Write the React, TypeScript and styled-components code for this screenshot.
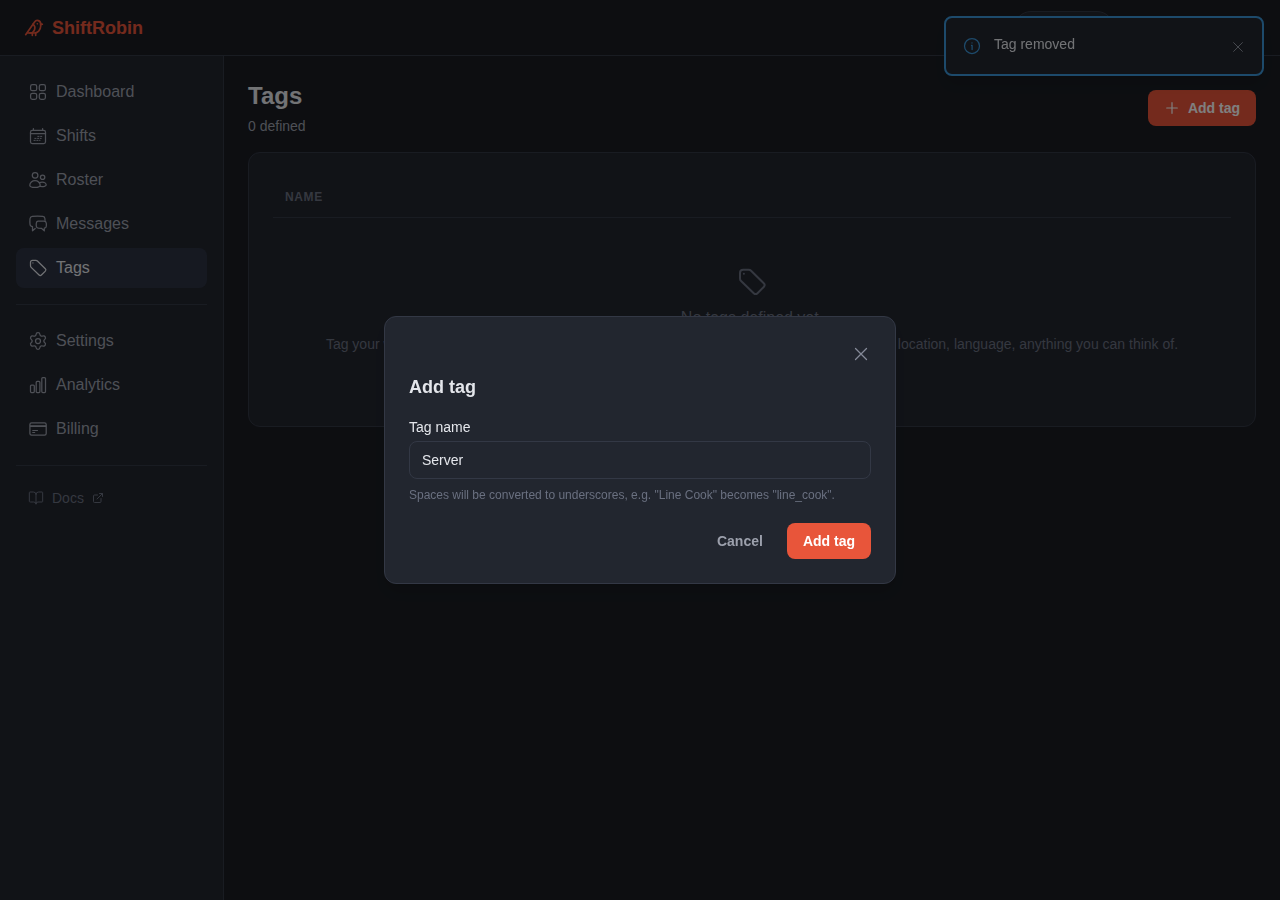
import React from "react";
import styled, { createGlobalStyle } from "styled-components";
import { Bird, BookOpen, ExternalLink, Settings } from "lucide-react";

const c = {
  bg: "#1a1d23",
  surface: "#22262f",
  border: "#333845",
  active: "#2d3343",
  text: "#e4e6eb",
  soft: "#9ca0ac",
  muted: "#858a98",
  faint: "#6a7080",
  accent: "#e8553a",
  info: "#3b95d6",
};

const GlobalStyle = createGlobalStyle`
  *, *::before, *::after { box-sizing: border-box; }
  body {
    margin: 0;
    background: ${c.bg};
    color: ${c.text};
    font-family: "Liberation Sans", Arial, sans-serif;
    font-size: 14px;
    line-height: 20px;
    overflow: hidden;
  }
  button, input { font: inherit; }
  h1, h2, h3, p { margin: 0; }
`;

const Page = styled.div`
  display: flex;
  flex-direction: column;
  height: 100vh;
`;

const Header = styled.header`
  display: flex;
  align-items: center;
  justify-content: space-between;
  height: 56px;
  padding: 0 24px;
  border-bottom: 1px solid ${c.border};
`;

const Brand = styled.div`
  display: flex;
  align-items: center;
  gap: 8px;
  color: ${c.accent};
  font-size: 18px;
  font-weight: 700;
`;

const ThemeSwitch = styled.div`
  width: 100px;
  height: 34px;
  margin-right: 142px;
  border: 1px solid ${c.border};
  border-radius: 17px;
  background: ${c.surface};
`;

const Body = styled.div`
  display: flex;
  flex: 1;
`;

const Sidebar = styled.nav`
  display: flex;
  flex-direction: column;
  gap: 4px;
  width: 224px;
  padding: 16px;
  background: ${c.surface};
  border-right: 1px solid ${c.border};
`;

const NavItem = styled.a<{ $active?: boolean }>`
  display: flex;
  align-items: center;
  gap: 8px;
  height: 40px;
  padding: 0 12px;
  border-radius: 8px;
  font-size: 16px;
  line-height: 24px;
  color: ${(p) => (p.$active ? c.text : c.soft)};
  background: ${(p) => (p.$active ? c.active : "transparent")};
`;

const Divider = styled.div`
  height: 1px;
  margin: 12px 0;
  background: ${c.border};
`;

const DocsLink = styled.a`
  display: flex;
  align-items: center;
  gap: 8px;
  height: 32px;
  padding: 0 12px;
  color: ${c.faint};
`;

const Main = styled.main`
  flex: 1;
  padding: 24px;
`;

const PageHead = styled.div`
  display: flex;
  align-items: center;
  justify-content: space-between;
  margin-bottom: 16px;
`;

const Title = styled.h1`
  font-size: 24px;
  line-height: 32px;
`;

const Subtitle = styled.p`
  margin-top: 4px;
  color: ${c.soft};
`;

const Button = styled.button<{ $ghost?: boolean }>`
  display: flex;
  align-items: center;
  gap: 8px;
  height: 36px;
  padding: 0 16px;
  border: 0;
  border-radius: 8px;
  font-size: 14px;
  font-weight: 700;
  color: ${(p) => (p.$ghost ? c.soft : "#fff")};
  background: ${(p) => (p.$ghost ? "transparent" : c.accent)};
`;

const Card = styled.section`
  padding: 24px;
  border: 1px solid ${c.border};
  border-radius: 12px;
  background: ${c.surface};
`;

const TableHead = styled.div`
  height: 41px;
  padding: 10px 12px;
  border-bottom: 1px solid ${c.border};
  font-size: 12px;
  font-weight: 700;
  letter-spacing: 0.6px;
  color: ${c.faint};
`;

const Empty = styled.div`
  display: flex;
  flex-direction: column;
  align-items: center;
  padding: 48px 0;
  color: ${c.faint};
`;

const EmptyTitle = styled.h3`
  margin: 8px 0 4px;
  font-size: 16px;
  font-weight: 400;
  line-height: 24px;
`;

const Toast = styled.div`
  position: fixed;
  top: 16px;
  right: 16px;
  display: flex;
  align-items: center;
  width: 320px;
  height: 60px;
  padding: 0 16px;
  border: 2px solid ${c.info};
  border-radius: 8px;
  background: ${c.surface};
  box-shadow: 0 10px 15px -3px rgba(0, 0, 0, 0.1), 0 4px 6px -4px rgba(0, 0, 0, 0.1);
`;

const ToastIcon = styled.span`
  display: flex;
  margin-right: 12px;
  color: ${c.info};
`;

const ToastText = styled.span`
  flex: 1;
  padding-bottom: 4px;
`;

const ToastClose = styled.span`
  display: flex;
  padding-top: 2px;
  color: ${c.soft};
`;

const Overlay = styled.div`
  position: fixed;
  inset: 0;
  display: flex;
  align-items: center;
  justify-content: center;
  background: rgba(0, 0, 0, 0.5);
`;

const Dialog = styled.div`
  display: flex;
  flex-direction: column;
  width: 512px;
  height: 268px;
  padding: 24px;
  border: 1px solid ${c.border};
  border-radius: 12px;
  background: ${c.surface};
  box-shadow: 0 10px 15px -3px rgba(0, 0, 0, 0.1), 0 4px 6px -4px rgba(0, 0, 0, 0.1);
`;

const DialogClose = styled.span`
  display: flex;
  align-self: flex-end;
  padding: 3px 0 5px;
  color: ${c.muted};
`;

const DialogTitle = styled.h2`
  margin: 4px 0 16px;
  font-size: 18px;
  line-height: 28px;
`;

const Label = styled.label`
  margin-bottom: 4px;
`;

const Input = styled.input`
  height: 38px;
  padding: 0 12px;
  border: 1px solid ${c.border};
  border-radius: 8px;
  outline: 0;
  color: ${c.text};
  background: transparent;
`;

const Hint = styled.p`
  margin-top: 8px;
  font-size: 12px;
  line-height: 16px;
  color: ${c.faint};
`;

const Actions = styled.div`
  display: flex;
  justify-content: flex-end;
  gap: 8px;
  margin-top: auto;
`;

type IconProps = { size?: number; box?: number; width?: number; children: React.ReactNode };

const Icon = ({ size = 20, box = 20, width = 1.25, children }: IconProps) => (
  <svg
    width={size}
    height={size}
    viewBox={`0 0 ${box} ${box}`}
    fill="none"
    stroke="currentColor"
    strokeWidth={width}
    strokeLinecap="round"
    strokeLinejoin="round"
  >
    {children}
  </svg>
);

const GridIcon = () => (
  <Icon>
    <rect x="2.6" y="2.6" width="6.1" height="6.1" rx="1.8" />
    <rect x="11.3" y="2.6" width="6.1" height="6.1" rx="1.8" />
    <rect x="2.6" y="11.3" width="6.1" height="6.1" rx="1.8" />
    <rect x="11.3" y="11.3" width="6.1" height="6.1" rx="1.8" />
  </Icon>
);

const CalendarIcon = () => (
  <Icon>
    <rect x="2.5" y="4.4" width="15" height="13.2" rx="1.8" />
    <path d="M2.5 7.7h15M5.4 2.6v1.7M14.6 2.6v1.7" />
    <path
      d="M9.4 10.4h5.200M6.400 12.400h7.200M5.600 14.400h6.800"
      strokeWidth="1"
      strokeDasharray="2 .8"
      strokeLinecap="butt"
    />
  </Icon>
);

const PeopleIcon = () => (
  <Icon>
    <circle cx="7.1" cy="5.3" r="2.8" />
    <circle cx="14.6" cy="7.2" r="2.2" />
    <path d="M7 10.600c-2.800 0-5.200 2-5.200 4.600 0 1.400 2 2.200 5.200 2.200s5.200-.8 5.200-2.200c0-2.600-2.400-4.600-5.200-4.600Z" />
    <path d="M11.200 12.700c.9-.4 2-.6 3.100-.6 2.200 0 3.900 1.500 3.900 3 0 1.100-2.600 1.700-6.100 1.300" />
  </Icon>
);

const ChatIcon = () => (
  <Icon>
    <path d="M17 6.700c0-.9 0-1.500-.1-2.200-.1-1.200-.9-1.900-2.100-2.100a40 40 0 0 0-10.500 0c-1.400.2-2.200.9-2.300 2.300a30 30 0 0 0 0 5.600c.1 1.400.9 2.200 2.500 2.400v4.100l2.700-2.300" />
    <path d="M10 7.200a30 30 0 0 1 6.200 0c1.300.1 2 .8 2.100 2 .1 1 .1 2 0 3-.1 1.200-.8 1.800-2 2v2.700l-2.900-2.600c-1 0-2 0-3-.1-1.300-.2-2-.8-2.100-2-.1-1-.1-2 0-3 .1-1.200.5-1.800 1.700-2Z" />
  </Icon>
);

const TagIcon = ({ size = 20 }: { size?: number }) => (
  <Icon size={size} box={24} width={1.5}>
    <path d="M5.400 2.900h4.100c.7 0 1.300.2 1.800.7l9.500 9.300c.9.900.9 1.900 0 2.800l-4.700 4.700c-.9.900-1.900.9-2.800 0l-9.500-9.200c-.6-.5-.8-1.100-.8-1.900V5.300c0-1.500.9-2.400 2.400-2.400Z" />
    <path d="M5.900 5.900h.01" />
  </Icon>
);

const ChartIcon = () => (
  <Icon>
    <rect x="2.500" y="10" width="3.800" height="7.600" rx="1" />
    <rect x="8.200" y="6.400" width="3.700" height="11.200" rx="1" />
    <rect x="13.800" y="2.600" width="3.700" height="15" rx="1" />
  </Icon>
);

const CardIcon = () => (
  <Icon>
    <rect x="1.900" y="3.800" width="16.300" height="12.400" rx="1.700" />
    <path d="M1.900 7.100h16.300" strokeWidth="1.800" strokeLinecap="butt" />
    <path d="M4.700 11.500h4.800M4.700 13.500h2" strokeWidth="1.100" />
  </Icon>
);

const InfoIcon = () => (
  <Icon>
    <circle cx="10" cy="10" r="7.500" />
    <path d="M9.500 9.400h.6v4.100M10 6.900h.01" />
  </Icon>
);

const PlusIcon = () => (
  <Icon size={16} box={16} width={1.2}>
    <path d="M8 2.700v10.600M2.700 8h10.600" />
  </Icon>
);

const CrossIcon = ({ size, width }: { size: number; width: number }) => (
  <Icon size={size} width={width}>
    <path d="m4.500 4.500 11 11M15.500 4.500l-11 11" />
  </Icon>
);

const primaryNav = [
  { label: "Dashboard", icon: <GridIcon /> },
  { label: "Shifts", icon: <CalendarIcon /> },
  { label: "Roster", icon: <PeopleIcon /> },
  { label: "Messages", icon: <ChatIcon /> },
  { label: "Tags", icon: <TagIcon />, active: true },
];

const secondaryNav = [
  { label: "Settings", icon: <Settings size={20} strokeWidth={1.5} /> },
  { label: "Analytics", icon: <ChartIcon /> },
  { label: "Billing", icon: <CardIcon /> },
];

export default function App() {
  return (
    <>
      <GlobalStyle />
      <Page>
        <Header>
          <Brand>
            <Bird size={20} strokeWidth={2} />
            ShiftRobin
          </Brand>
          <ThemeSwitch />
        </Header>
        <Body>
          <Sidebar>
            {primaryNav.map((item) => (
              <NavItem key={item.label} $active={item.active}>
                {item.icon}
                {item.label}
              </NavItem>
            ))}
            <Divider />
            {secondaryNav.map((item) => (
              <NavItem key={item.label}>
                {item.icon}
                {item.label}
              </NavItem>
            ))}
            <Divider />
            <DocsLink>
              <BookOpen size={16} strokeWidth={1.5} />
              Docs
              <ExternalLink size={12} />
            </DocsLink>
          </Sidebar>
          <Main>
            <PageHead>
              <div>
                <Title>Tags</Title>
                <Subtitle>0 defined</Subtitle>
              </div>
              <Button>
                <PlusIcon />
                Add tag
              </Button>
            </PageHead>
            <Card>
              <TableHead>NAME</TableHead>
              <Empty>
                <TagIcon size={32} />
                <EmptyTitle>No tags defined yet.</EmptyTitle>
                <p>
                  Tag your workers to group them and target the right people for each shift: role, skill, training,
                  location, language, anything you can think of.
                </p>
              </Empty>
            </Card>
          </Main>
        </Body>
      </Page>
      <Toast>
        <ToastIcon>
          <InfoIcon />
        </ToastIcon>
        <ToastText>Tag removed</ToastText>
        <ToastClose>
          <CrossIcon size={16} width={1.1} />
        </ToastClose>
      </Toast>
      <Overlay>
        <Dialog role="dialog">
          <DialogClose>
            <CrossIcon size={20} width={1.25} />
          </DialogClose>
          <DialogTitle>Add tag</DialogTitle>
          <Label htmlFor="tag-name">Tag name</Label>
          <Input id="tag-name" defaultValue="Server" />
          <Hint>Spaces will be converted to underscores, e.g. "Line Cook" becomes "line_cook".</Hint>
          <Actions>
            <Button $ghost>Cancel</Button>
            <Button>Add tag</Button>
          </Actions>
        </Dialog>
      </Overlay>
    </>
  );
}
